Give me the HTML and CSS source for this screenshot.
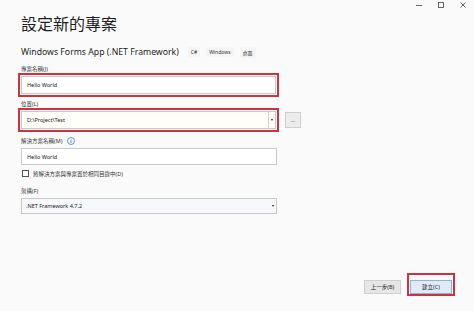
FILE: index.html
```html
<!DOCTYPE html>
<html lang="zh-Hant">
<head>
  <meta charset="UTF-8">
  <meta name="viewport" content="width=device-width, initial-scale=1.0">
  <title>設定新的專案</title>
  <link rel="stylesheet" href="styles.css">
</head>
<body>

<div class="window">
  <div class="titlebar">
    <span class="ctl">
      <svg width="6" height="6" viewBox="0 0 6 6"><path d="M0 3.5h6" stroke="#444" stroke-width="0.8"/></svg>
    </span>
    <span class="ctl">
      <svg width="6" height="6" viewBox="0 0 6 6"><rect x="0.5" y="0.5" width="5" height="5" fill="none" stroke="#444" stroke-width="0.8"/></svg>
    </span>
    <span class="ctl">
      <svg width="6" height="6" viewBox="0 0 6 6"><path d="M0.5 0.5l5 5M5.5 0.5l-5 5" stroke="#444" stroke-width="0.8"/></svg>
    </span>
  </div>

  <div class="content">
    <h1 class="title">設定新的專案</h1>

    <div class="subtitle">
      <span class="app-name">Windows Forms App (.NET Framework)</span>
      <span class="tag">C#</span>
      <span class="tag">Windows</span>
      <span class="tag">桌面</span>
    </div>

    <!-- project name -->
    <div class="field-label first">專案名稱(J)</div>
    <div class="highlight">
      <div class="text-box">Hello World</div>
    </div>

    <!-- location -->
    <div class="field-label">位置(L)</div>
    <div class="location-row">
      <div class="highlight">
        <div class="text-box combo">
          <span>D:\Project\Test</span>
          <span class="combo-btn"><span class="arrow"></span></span>
        </div>
      </div>
      <div class="browse-btn">...</div>
    </div>

    <!-- solution name -->
    <div class="field-label with-info">
      解決方案名稱(M)
      <svg class="info" width="8" height="8" viewBox="0 0 8 8">
        <circle cx="4" cy="4" r="3.5" fill="none" stroke="#1e74c6" stroke-width="0.7"/>
        <path d="M4 3.4v2.6" stroke="#1e74c6" stroke-width="0.8"/>
        <circle cx="4" cy="2.3" r="0.45" fill="#1e74c6"/>
      </svg>
    </div>
    <div class="text-box plain">Hello World</div>

    <div class="check-row">
      <span class="checkbox"></span>
      <span>將解決方案與專案置於相同目錄中(D)</span>
    </div>

    <!-- framework -->
    <div class="field-label framework">架構(F)</div>
    <div class="select-box">
      <span>.NET Framework 4.7.2</span>
      <span class="arrow"></span>
    </div>
  </div>

  <div class="footer">
    <div class="btn">上一步(B)</div>
    <div class="highlight create-wrap">
      <div class="btn primary">建立(C)</div>
    </div>
  </div>
</div>

</body>
</html>
```

FILE: styles.css
```css
html, body {
  margin: 0;
  padding: 0;
}
body {
  background-color: #fafafa;
  font-family: "Noto Sans", "Noto Sans CJK TC", sans-serif;
  color: #1e1e1e;
}
.window {
  height: 311px;
  display: flex;
  flex-direction: column;
  overflow: hidden;
}
.titlebar {
  height: 13px;
  display: flex;
  justify-content: flex-end;
}
.ctl {
  width: 22px;
  padding-top: 2px;
  display: flex;
  justify-content: center;
}
.ctl svg {
  display: block;
}
.content {
  padding-left: 21px;
}
.title {
  margin: 0;
  font-size: 16px;
  line-height: 23px;
  font-weight: normal;
  color: #1e1e1e;
}
.subtitle {
  margin-top: 9px;
  height: 14px;
  display: flex;
  align-items: center;
}
.app-name {
  font-size: 8.7px;
  color: #1e1e1e;
  margin-right: 9px;
}
.tag {
  font-size: 5px;
  color: #333;
  background-color: #f5f5f5;
  padding: 2px 3px;
  margin-right: 6px;
}
.field-label {
  font-size: 5.5px;
  line-height: 7px;
  height: 7px;
  color: #333;
  margin-top: 4px;
}
.field-label.first {
  margin-top: 7px;
}
.field-label.with-info {
  margin-top: 5px;
  height: 8px;
  line-height: 8px;
  display: flex;
  align-items: center;
}
.info {
  margin-left: 5px;
}
.field-label.framework {
  margin-top: 10px;
}
.highlight {
  border: 2px solid #cc3340;
  padding: 1px;
  margin-left: -3px;
  width: 255px;
}
.text-box {
  border: 1px solid #c9c9c9;
  background-color: #fff;
  font-size: 5.5px;
  color: #222;
  display: flex;
  align-items: center;
  padding-left: 5px;
  box-sizing: border-box;
  height: 18px;
}
.text-box.combo {
  background-color: #fffef8;
  justify-content: space-between;
  padding-right: 0;
}
.combo-btn {
  width: 6px;
  height: 100%;
  border-left: 1px solid #d6d6d6;
  display: flex;
  align-items: center;
  justify-content: center;
}
.arrow {
  width: 0;
  height: 0;
  border-left: 1.5px solid transparent;
  border-right: 1.5px solid transparent;
  border-top: 2px solid #222;
}
.text-box.plain {
  width: 256px;
  height: 17px;
  margin-top: 3px;
}
.location-row {
  display: flex;
  align-items: center;
}
.browse-btn {
  width: 16px;
  height: 16px;
  margin-left: 6px;
  box-sizing: border-box;
  border: 1px solid #cfcfcf;
  background-color: #ececec;
  font-size: 5px;
  color: #555;
  display: flex;
  align-items: center;
  justify-content: center;
}
.check-row {
  margin-top: 4px;
  height: 9px;
  display: flex;
  align-items: center;
  font-size: 5.5px;
  color: #333;
}
.checkbox {
  width: 7px;
  height: 7px;
  box-sizing: border-box;
  border: 1px solid #555;
  background-color: #fff;
  margin-left: 1px;
  margin-right: 4px;
}
.select-box {
  margin-top: 3px;
  width: 256px;
  height: 16px;
  box-sizing: border-box;
  border: 1px solid #c9c9c9;
  background-color: #f6f8fc;
  font-size: 5.5px;
  color: #222;
  display: flex;
  align-items: center;
  justify-content: space-between;
  padding: 0 2px 0 4px;
}
.footer {
  margin-top: auto;
  padding: 0 19px 15px 0;
  display: flex;
  justify-content: flex-end;
  align-items: flex-end;
}
.btn {
  height: 14px;
  box-sizing: border-box;
  border: 1px solid #cfcfcf;
  background-color: #e6e6e6;
  font-size: 5.5px;
  color: #222;
  display: flex;
  align-items: center;
  justify-content: center;
  width: 37px;
  margin-bottom: 2px;
}
.create-wrap {
  width: auto;
  margin-left: 6px;
  padding: 5px 1px 0 1px;
}
.btn.primary {
  width: 42px;
  margin-bottom: 0;
  background-color: #e2ebf5;
  border-color: #8db4de;
}
```
